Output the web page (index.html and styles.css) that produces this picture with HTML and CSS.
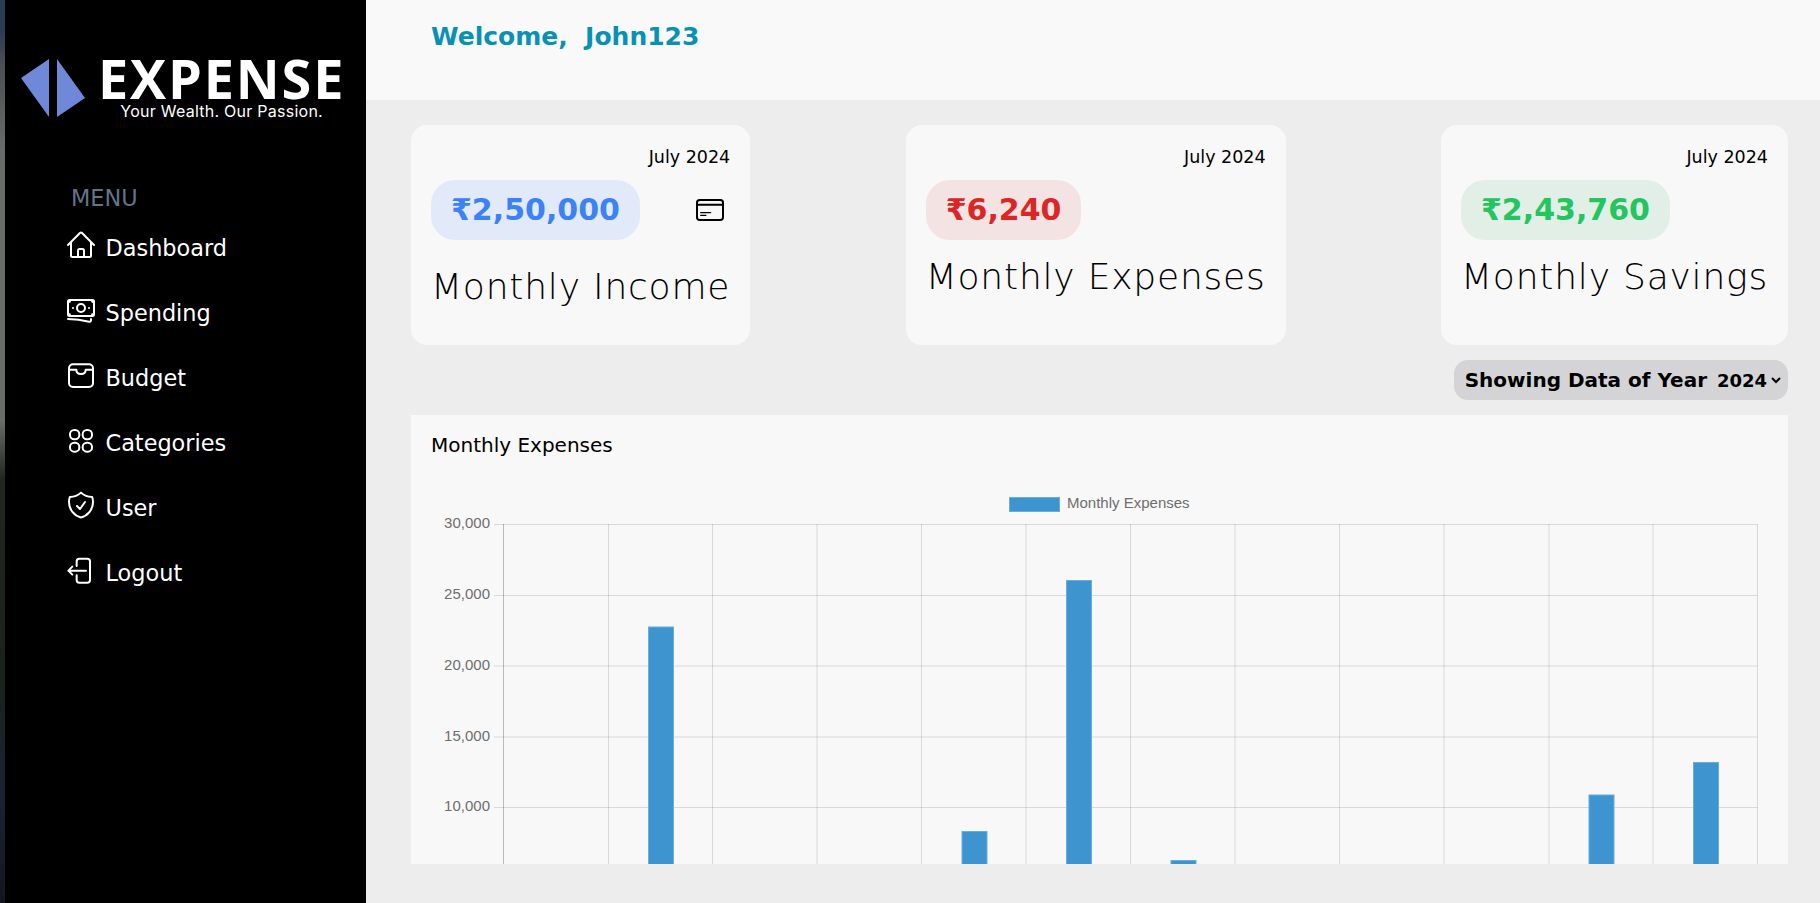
FILE: index.html
```html
<!DOCTYPE html>
<html>
    <head>
        <meta http-equiv="Content-Type" content="text/html; charset=utf-8">
        <title>Expense Dashboard</title>
        <link rel="stylesheet" href="styles.css">
    </head>
    <body>
        <div class="edgeStrip"></div>
        <aside class="sidebar">
            <div class="logo">
                <svg class="logoMark" viewBox="0 0 66 60">
                    <polygon points="1,20 29,1 29,59"></polygon>
                    <polygon points="37,1 65,40 37,59"></polygon>
                </svg>
                <div class="logoText">
                    <div class="logoName">EXPENSE</div>
                    <div class="logoTag">Your Wealth. Our Passion.</div>
                </div>
            </div>
            <div class="menuLabel">MENU</div>
            <nav class="menu">
                <a class="menuItem">
                    <svg class="icon" viewBox="0 0 24 24"><path d="m2.25 12 8.954-8.955c.44-.439 1.152-.439 1.591 0L21.75 12M4.5 9.75v10.125c0 .621.504 1.125 1.125 1.125H9.75v-4.875c0-.621.504-1.125 1.125-1.125h2.25c.621 0 1.125.504 1.125 1.125V21h4.125c.621 0 1.125-.504 1.125-1.125V9.75M8.25 21h8.25"></path></svg>
                    <span class="menuText">Dashboard</span>
                </a>
                <a class="menuItem">
                    <svg class="icon" viewBox="0 0 24 24"><path d="M2.25 18.75a60.07 60.07 0 0 1 15.797 2.101c.727.198 1.453-.342 1.453-1.096V18.75M3.75 4.5v.75A.75.75 0 0 1 3 6h-.75m0 0v-.375c0-.621.504-1.125 1.125-1.125H20.25M2.25 6v9m18-10.5v.75c0 .414.336.75.75.75h.75m-1.5-1.5h.375c.621 0 1.125.504 1.125 1.125v9.75c0 .621-.504 1.125-1.125 1.125h-.375m1.5-1.5H21a.75.75 0 0 0-.75.75v.75m0 0H3.75m0 0h-.375a1.125 1.125 0 0 1-1.125-1.125V15m1.5 1.5v-.75A.75.75 0 0 0 3 15h-.75M15 10.5a3 3 0 1 1-6 0 3 3 0 0 1 6 0Zm3 0h.008v.008H18V10.5Zm-12 0h.008v.008H6V10.5Z"></path></svg>
                    <span class="menuText">Spending</span>
                </a>
                <a class="menuItem">
                    <svg class="icon" viewBox="0 0 24 24"><rect x="3" y="4" width="18" height="17" rx="3"></rect><path d="M3 8h5.5c0 2 1.5 3.2 3.5 3.2s3.5-1.2 3.5-3.2H21"></path></svg>
                    <span class="menuText">Budget</span>
                </a>
                <a class="menuItem">
                    <svg class="icon" viewBox="0 0 24 24"><rect x="3.75" y="4.5" width="7" height="7" rx="3.2"></rect><rect x="13.25" y="4.5" width="7" height="7" rx="3.2"></rect><rect x="3.75" y="14" width="7" height="6.75" rx="3.2"></rect><rect x="13.25" y="14" width="7" height="6.75" rx="3.2"></rect></svg>
                    <span class="menuText">Categories</span>
                </a>
                <a class="menuItem">
                    <svg class="icon" viewBox="0 0 24 24"><path d="M9 12.75 11.25 15 15 9.75m-3-7.036A11.959 11.959 0 0 1 3.598 6 11.99 11.99 0 0 0 3 9.749c0 5.592 3.824 10.29 9 11.623 5.176-1.332 9-6.03 9-11.622 0-1.31-.21-2.571-.598-3.751h-.152c-3.196 0-6.1-1.248-8.25-3.285Z"></path></svg>
                    <span class="menuText">User</span>
                </a>
                <a class="menuItem">
                    <svg class="icon" viewBox="0 0 24 24"><path d="M8.75 9V5.5a2 2 0 0 1 2-2h6a2 2 0 0 1 2 2v14a2 2 0 0 1-2 2h-6a2 2 0 0 1-2-2V16M15.75 12.5H2.5m0 0 3-3m-3 3 3 3"></path></svg>
                    <span class="menuText">Logout</span>
                </a>
            </nav>
        </aside>
        <div class="page">
            <header class="topBar">
                <h1 class="welcome">Welcome,&nbsp; John123</h1>
            </header>
            <main class="content">
                <section class="cards">
                    <div class="card">
                        <div class="cardDate">July 2024</div>
                        <div class="cardRow">
                            <span class="amount amountBlue">₹2,50,000</span>
                            <svg class="cardIcon" viewBox="0 0 24 24">
                                <rect x="2.25" y="4.5" width="19.5" height="15" rx="2"></rect>
                                <path d="M2.25 8h19.5"></path>
                                <path class="thinLine" d="M5 14h7.5M5 16h4"></path>
                            </svg>
                        </div>
                        <div class="cardTitle cardTitleLow">Monthly Income</div>
                    </div>
                    <div class="card">
                        <div class="cardDate">July 2024</div>
                        <div class="cardRow">
                            <span class="amount amountRed">₹6,240</span>
                        </div>
                        <div class="cardTitle">Monthly Expenses</div>
                    </div>
                    <div class="card">
                        <div class="cardDate">July 2024</div>
                        <div class="cardRow">
                            <span class="amount amountGreen">₹2,43,760</span>
                        </div>
                        <div class="cardTitle">Monthly Savings</div>
                    </div>
                </section>
                <div class="yearRow">
                    <div class="yearPicker">
                        <label class="yearLabel" for="year">Showing Data of Year</label>
                        <select class="yearSelect" id="year">
                            <option>2024</option>
                            <option>2023</option>
                        </select>
                    </div>
                </div>
                <section class="chartCard">
                    <h2 class="chartTitle">Monthly Expenses</h2>
                    <svg class="chart" width="1377" height="406" viewBox="0 0 1377 406">
                        <g class="grid">
                            <path d="M83 66.5H1346.5M83 137.5H1346.5M83 208H1346.5M83 279H1346.5M83 349.5H1346.5"></path>
                            <path d="M197.5 66V406M301.5 66V406M406 66V406M510.5 66V406M615 66V406M719.5 66V406M824 66V406M928.5 66V406M1033 66V406M1138 66V406M1242 66V406M1346.5 66V406"></path>
                            <path class="axis" d="M92.5 66V406"></path>
                        </g>
                        <g class="ticks">
                            <text x="79" y="70">30,000</text>
                            <text x="79" y="141">25,000</text>
                            <text x="79" y="212">20,000</text>
                            <text x="79" y="283">15,000</text>
                            <text x="79" y="353">10,000</text>
                        </g>
                        <g class="bars">
                            <rect x="237.5" y="169" width="25" height="240"></rect>
                            <rect x="551" y="373.5" width="25" height="40"></rect>
                            <rect x="655.5" y="122.5" width="25" height="290"></rect>
                            <rect x="760" y="402.5" width="25" height="10"></rect>
                            <rect x="1178" y="337" width="25" height="80"></rect>
                            <rect x="1282.5" y="304.5" width="25" height="110"></rect>
                        </g>
                        <rect class="legendBox" x="598.5" y="39.5" width="50" height="14"></rect>
                        <text class="legendText" x="656" y="50">Monthly Expenses</text>
                    </svg>
                </section>
            </main>
        </div>
    </body>
</html>
```

FILE: styles.css
```css
*{
    box-sizing: border-box;
}
html, body{
    height: 100%;
}
body{
    margin: 0;
    display: flex;
    height: 903px;
    overflow: hidden;
    font-family: "DejaVu Sans", sans-serif;
    color: #000;
    background: #ededed;
}
.edgeStrip{
    width: 5px;
    flex-shrink: 0;
    background: linear-gradient(to bottom, #2c3a58 0, #2c3a58 30px, #4a4d52 60px, #6a6c6a 150px, #6a6d68 420px, #22261f 480px, #1a221c 680px, #1a2233 800px, #14161f 903px);
}
.sidebar{
    width: 361px;
    flex-shrink: 0;
    background: #000;
    color: #fff;
}
.logo{
    display: flex;
    padding: 54px 0 0 15px;
    height: 185px;
}
.logoMark{
    width: 66px;
    height: 60px;
    margin-top: 4px;
    fill: #7088d8;
    flex-shrink: 0;
}
.logoText{
    margin-left: 12px;
    text-align: center;
}
.logoName{
    font-family: "Open Sans", sans-serif;
    font-weight: 700;
    font-size: 54px;
    line-height: 49px;
    letter-spacing: 1.85px;
}
.logoTag{
    font-family: "Inter", sans-serif;
    font-size: 16px;
    line-height: 16px;
    letter-spacing: 0.25px;
}
.menuLabel{
    font-size: 22.4px;
    line-height: 26px;
    color: #64748b;
    padding-left: 66px;
}
.menu{
    display: flex;
    flex-direction: column;
    gap: 33px;
    padding-left: 60px;
    margin-top: 18px;
}
.menuItem{
    display: flex;
    align-items: flex-start;
    gap: 8.5px;
    height: 32px;
}
.menuText{
    font-size: 22.4px;
    line-height: 26px;
    padding-top: 6px;
}
.icon{
    width: 32px;
    height: 32px;
    fill: none;
    stroke: #fff;
    stroke-width: 1.5;
    stroke-linecap: round;
    stroke-linejoin: round;
    flex-shrink: 0;
}
.page{
    flex: 1;
    min-width: 0;
}
.topBar{
    height: 100px;
    background: #f9f9f9;
    padding: 21px 0 0 65px;
}
.welcome{
    margin: 0;
    font-size: 25px;
    line-height: 32px;
    font-weight: 700;
    color: #0891b2;
}
.content{
    padding: 25px 32px 0 45px;
}
.cards{
    display: flex;
    justify-content: space-between;
}
.card{
    background: #f8f8f8;
    border-radius: 16px;
    padding: 19px 20px 31px;
}
.cardDate{
    font-size: 17.5px;
    line-height: 26px;
    text-align: right;
}
.cardRow{
    display: flex;
    justify-content: space-between;
    align-items: center;
    margin-top: 10px;
}
.amount{
    height: 60px;
    line-height: 60px;
    padding: 0 20px;
    border-radius: 24px;
    font-size: 30px;
    font-weight: 700;
}
.amountBlue{
    background: #e2e9f8;
    color: #3b82f6;
}
.amountRed{
    background: #f3e3e3;
    color: #dc2626;
}
.amountGreen{
    background: #e1efe6;
    color: #22c55e;
}
.cardIcon{
    width: 32px;
    height: 32px;
    margin-right: 4px;
    fill: none;
    stroke: #000;
    stroke-width: 1.5;
    stroke-linecap: round;
}
.thinLine{
    stroke-width: 0.9;
}
.cardTitle{
    font-size: 36px;
    font-weight: 200;
    line-height: 54px;
    letter-spacing: 0.8px;
    margin-top: 10px;
    white-space: nowrap;
}
.cardTitleLow{
    margin-top: 20px;
}
.yearRow{
    display: flex;
    justify-content: flex-end;
    margin-top: 15px;
}
.yearPicker{
    display: flex;
    align-items: center;
    height: 40px;
    background: #d4d4d6;
    border-radius: 14px;
    padding: 0 4px 0 11px;
}
.yearLabel{
    font-size: 20px;
    font-weight: 700;
}
.yearSelect{
    font-family: inherit;
    font-size: 18px;
    font-weight: 700;
    border: none;
    background: transparent;
    margin-left: 6px;
    outline: none;
}
.chartCard{
    margin-top: 15px;
    height: 449px;
    background: #f8f8f8;
    overflow: hidden;
}
.chartTitle{
    margin: 0;
    padding: 17px 0 0 20px;
    font-size: 20px;
    line-height: 26px;
    font-weight: 400;
}
.chart{
    display: block;
}
.grid path{
    fill: none;
    stroke: rgba(0, 0, 0, 0.12);
    stroke-width: 1;
}
.grid .axis{
    stroke: rgba(0, 0, 0, 0.25);
}
.ticks text{
    font-family: "Liberation Sans", sans-serif;
    font-size: 15px;
    fill: #6e6e6e;
    text-anchor: end;
}
.bars rect, .legendBox{
    fill: #3e94ce;
    stroke: #66ade0;
    stroke-width: 1;
}
.legendText{
    font-family: "Liberation Sans", sans-serif;
    font-size: 15px;
    fill: #6e6e6e;
}
```
